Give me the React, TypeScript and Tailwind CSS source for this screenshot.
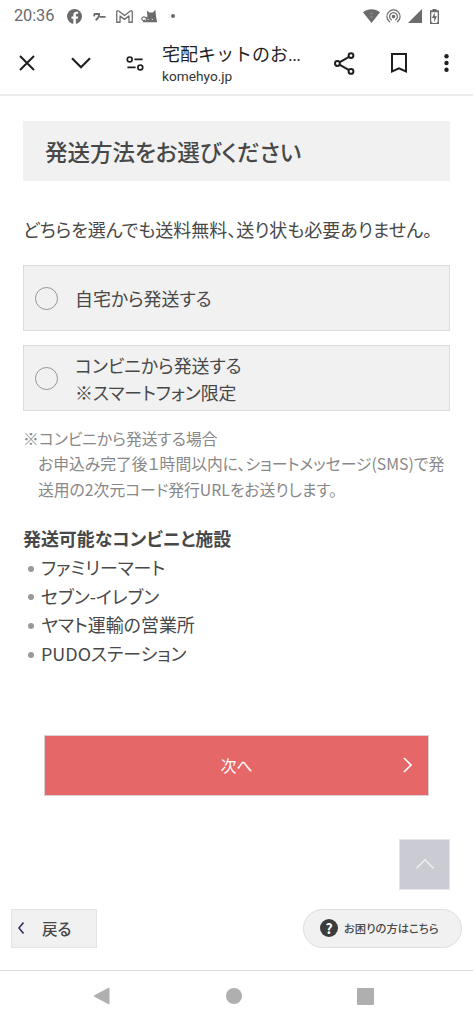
import React from 'react';

const JP = "font-['Noto_Sans_CJK_JP',sans-serif]";

const OPTIONS = [
  { id: 'home', lines: ['自宅から発送する'] },
  { id: 'store', lines: ['コンビニから発送する', '※スマートフォン限定'] },
];

const PLACES = ['ファミリーマート', 'セブン-イレブン', 'ヤマト運輸の営業所', 'PUDOステーション'];

const StatusBar: React.FC = () => (
  <div className="flex h-8 shrink-0 items-center pl-[14px] font-['Roboto',sans-serif] text-[16.4px] text-[#6b6b6b]">
    <span className="w-[53px] leading-8 tracking-[-0.1px]">20:36</span>
    <svg className="h-[15px] w-[15px]" viewBox="0 0 14 14">
      <circle cx="7" cy="7" r="7" fill="#6b6b6b" />
      <path d="M5.9 14V9H4.2V7h1.7V5.5c0-2 1.2-3 3-3h1.5v2h-1c-.9 0-1.1.4-1.1 1.1V7h2.1l-.4 2H8.3v5z" fill="#fff" />
    </svg>
    <svg className="ml-[11px] h-[9px] w-[13px]" viewBox="0 0 13 9" fill="none" stroke="#6b6b6b" strokeWidth="1.8">
      <path d="M1 4.4 1.6 2H6.2C6 4.8 4.8 6.9 2.6 8.2M6.6 4.9h6" />
    </svg>
    <svg className="ml-[10px] h-[13px] w-[17px]" viewBox="0 0 16 12" fill="none" stroke="#6b6b6b" strokeWidth="1.2" strokeLinejoin="round">
      <path d="M.7 1.6C.7.7 1.8.4 2.5.9L8 5.1 13.5.9c.7-.5 1.8-.2 1.8.7v9.8h-3.1V5.5L8 8.7 3.8 5.5v5.9H.7z" />
    </svg>
    <svg className="ml-[8px] h-[14px] w-[17px]" viewBox="0 0 17 14" fill="#6b6b6b">
      <path d="M5.8 1.4 8.4 3.5h3.5L14.4.7l.7 7 .9 4.8H4.8L4.5 8.6l2-1.2z" />
      <path d="M4.8 8.6C3 7.1.8 8 .8 9.8s2.2 2.3 3.4 1.2M2 12.7h14" fill="none" stroke="#6b6b6b" strokeWidth="1.2" />
      <path d="m6.6 9.8 .8 1.2m3.5-1.2 .8 1.2" stroke="#fff" strokeWidth=".9" />
    </svg>
    <span className="ml-[13px] h-1 w-1 rounded-full bg-[#6b6b6b]" />
    <div className="ml-auto flex items-center pr-[34px]">
      <svg className="h-[14px] w-[17px]" viewBox="0 0 17 14">
        <path d="M0 3.3C5-.8 12-.8 17 3.3L8.5 14z" fill="#6b6b6b" />
        <path d="m8.5 2.7 2 2.8h-4zM6.5 7h4l-2 2.8z" fill="#828282" />
      </svg>
      <svg className="ml-[6px] h-[14px] w-[15px]" viewBox="0 0 15 14" fill="none" stroke="#6b6b6b" strokeWidth="1.2" strokeLinecap="round">
        <circle cx="7.5" cy="7.6" r="1.2" fill="#6b6b6b" />
        <path d="M5.3 10.8a3.9 3.9 0 1 1 4.4 0M3.6 12.8a6.6 6.6 0 1 1 7.8 0" />
      </svg>
      <svg className="ml-[7px] h-[14px] w-[14px]" viewBox="0 0 14 14">
        <path d="M0 14 14 0v14z" fill="#6b6b6b" />
      </svg>
      <svg className="ml-[8px] h-[15px] w-[9px]" viewBox="0 0 9 15">
        <path d="M2.5 0h4v1.3H9V15H0V1.3h2.5z" fill="#6b6b6b" />
        <path d="M1.3 3.2h6.4v9.5L6.3 14H2.7l-1.4-1.3z" fill="#fff" />
        <path d="M4.8 3.5v3.8h2.3L4.2 13V9H1.9z" fill="#6b6b6b" />
      </svg>
    </div>
  </div>
);

const BrowserBar: React.FC = () => (
  <header className="flex h-16 shrink-0 items-center border-b-2 border-[#ececec] text-[#1f1f1f]">
    <svg className="ml-[19px] h-4 w-4" viewBox="0 0 16 16" fill="none" stroke="currentColor" strokeWidth="2">
      <path d="m1 1 14 14M15 1 1 15" />
    </svg>
    <svg className="ml-[36px] h-3 w-5" viewBox="0 0 20 12" fill="none" stroke="currentColor" strokeWidth="2.1">
      <path d="m1 1.2 9 9 9-9" />
    </svg>
    <svg className="ml-[35px] h-[15px] w-[18px]" viewBox="0 0 18 15" fill="none" stroke="currentColor" strokeWidth="1.7">
      <circle cx="3.7" cy="3.4" r="2.4" />
      <circle cx="14.3" cy="11.4" r="2.4" />
      <path d="M8.4 3.4h8.2M1.4 11.4h8.2" />
    </svg>
    <div className="ml-[18px] w-[150px]">
      <div className="h-[26px] text-[18px] leading-[25px] whitespace-nowrap">
        <span className={JP}>宅配キットのお</span>
        <span className="font-['Roboto',sans-serif] tracking-[-0.6px]">...</span>
      </div>
      <div className="h-[18px] font-['Roboto',sans-serif] text-[13.7px] leading-[18px] text-[#333]">komehyo.jp</div>
    </div>
    <svg className="ml-[22px] h-[23px] w-[21px]" viewBox="0 0 21 23" fill="none" stroke="currentColor" strokeWidth="2">
      <circle cx="3.4" cy="11.5" r="2.4" />
      <circle cx="17" cy="3.6" r="2.4" />
      <circle cx="17" cy="19.4" r="2.4" />
      <path d="M5.5 10.3 15 4.8M5.5 12.7l9.5 5.5" />
    </svg>
    <svg className="ml-[36px] h-[20px] w-[16px]" viewBox="0 0 16 20" fill="none" stroke="currentColor" strokeWidth="2">
      <path d="M1 18.4V1h14v17.4l-7-3z" />
    </svg>
    <svg className="ml-[37px] h-[18px] w-[5px]" viewBox="0 0 5 18" fill="currentColor">
      <circle cx="2.5" cy="2.2" r="2.2" />
      <circle cx="2.5" cy="9" r="2.2" />
      <circle cx="2.5" cy="15.8" r="2.2" />
    </svg>
  </header>
);

const App: React.FC = () => {
  return (
    <div className="flex h-[1024px] w-[473px] flex-col overflow-hidden bg-white">
      <StatusBar />
      <BrowserBar />

      <main className="flex-1 pt-[25px] font-['Noto_Sans_CJK_JP',sans-serif] text-[#484848] [font-feature-settings:'palt']">
        <div className="mx-[23px]">
          <h1 className="h-[60px] bg-[#f1f1f1] pl-[22px] text-[22.5px] leading-[61px] font-medium whitespace-nowrap">
            発送方法をお選びください
          </h1>
          <p className="mt-[33px] h-[31px] text-[18px] leading-[30px] whitespace-nowrap">
            どちらを選んでも送料無料、送り状も必要ありません。
          </p>

          <div className="mt-[20px] flex flex-col gap-[14px]">
            {OPTIONS.map((option) => (
              <label key={option.id} className="flex h-[66px] items-center border border-[#dcdcdc] bg-[#f1f1f1] pl-[11px]">
                <span className="h-[23px] w-[23px] shrink-0 rounded-full border border-[#9494a0]" />
                <span className="mt-px ml-[17px] text-[17.9px] leading-[27px] whitespace-nowrap">
                  {option.lines.map((line) => (
                    <span key={line} className="block">{line}</span>
                  ))}
                </span>
              </label>
            ))}
          </div>

          <div className="mt-[15px] text-[15.8px] leading-[25.3px] whitespace-nowrap text-[#888]">
            <p>※コンビニから発送する場合</p>
            <p className="pl-[15px]">お申込み完了後１時間以内に、ショートメッセージ(SMS)で発</p>
            <p className="pl-[15px]">送用の2次元コード発行URLをお送りします。</p>
          </div>

          <h2 className="mt-[22px] text-[17.95px] leading-[29px] font-bold">発送可能なコンビニと施設</h2>
          <ul className="text-[17.95px] leading-[28.7px]">
            {PLACES.map((place) => (
              <li key={place} className="flex items-center pl-[5px]">
                <span className="mt-[3px] mr-[7px] h-[6px] w-[6px] rounded-full bg-[#999]" />
                {place}
              </li>
            ))}
          </ul>
        </div>

        <button className="mt-[67px] ml-[44px] flex h-[61px] w-[385px] items-center justify-center border border-[#dccfd2] bg-[#e56767] text-[16px] text-white">
          <span className="ml-[25px] flex-1 text-center">次へ</span>
          <svg className="mr-[16px] h-[16px] w-[9px]" viewBox="0 0 9 16" fill="none" stroke="currentColor" strokeWidth="1.6">
            <path d="m1 1 7 7-7 7" />
          </svg>
        </button>

        <div className="mt-[43px] mr-[23px] ml-auto flex h-[51px] w-[51px] items-center justify-center border border-[#e6e6ea] bg-[#cbcbd4]">
          <svg className="h-[10px] w-[18px]" viewBox="0 0 18 10" fill="none" stroke="#f1f1f4" strokeWidth="1.3">
            <path d="m.6 9.2 8.4-8.4 8.4 8.4" />
          </svg>
        </div>

        <div className="mt-[19px] flex justify-between px-[11px]">
          <button className="flex h-[39px] w-[86px] items-center border border-[#e3e3e9] bg-[#f1f1f1] pl-[6px] text-[15.5px] font-medium">
            <svg className="h-[12px] w-[6px]" viewBox="0 0 6 12" fill="none" stroke="#2f2a58" strokeWidth="1.5">
              <path d="M5.5.6.9 6l4.6 5.4" />
            </svg>
            <span className="ml-[18px]">戻る</span>
          </button>
          <button className="flex h-[39px] w-[159px] items-center rounded-full border border-[#dedee2] bg-[#f1f1f1] pl-[16px] text-[11.3px] font-medium whitespace-nowrap">
            <span className="mr-[6px] flex h-[18px] w-[18px] items-center justify-center rounded-full bg-[#3c3c3c] text-[14px] font-bold text-white">?</span>
            お困りの方はこちら
          </button>
        </div>
      </main>

      <nav className="flex h-[54px] shrink-0 items-center border-t border-[#dedede] pb-[3px] pl-[93px]">
        <svg className="h-[18px] w-[17px]" viewBox="0 0 17 18">
          <path d="M1 9 16 1v16z" fill="#afafaf" stroke="#afafaf" strokeLinejoin="round" />
        </svg>
        <span className="ml-[116px] h-4 w-4 rounded-full bg-[#afafaf]" />
        <span className="ml-[115px] h-[17px] w-[17px] rounded-[1px] bg-[#afafaf]" />
      </nav>
    </div>
  );
};

export default App;
